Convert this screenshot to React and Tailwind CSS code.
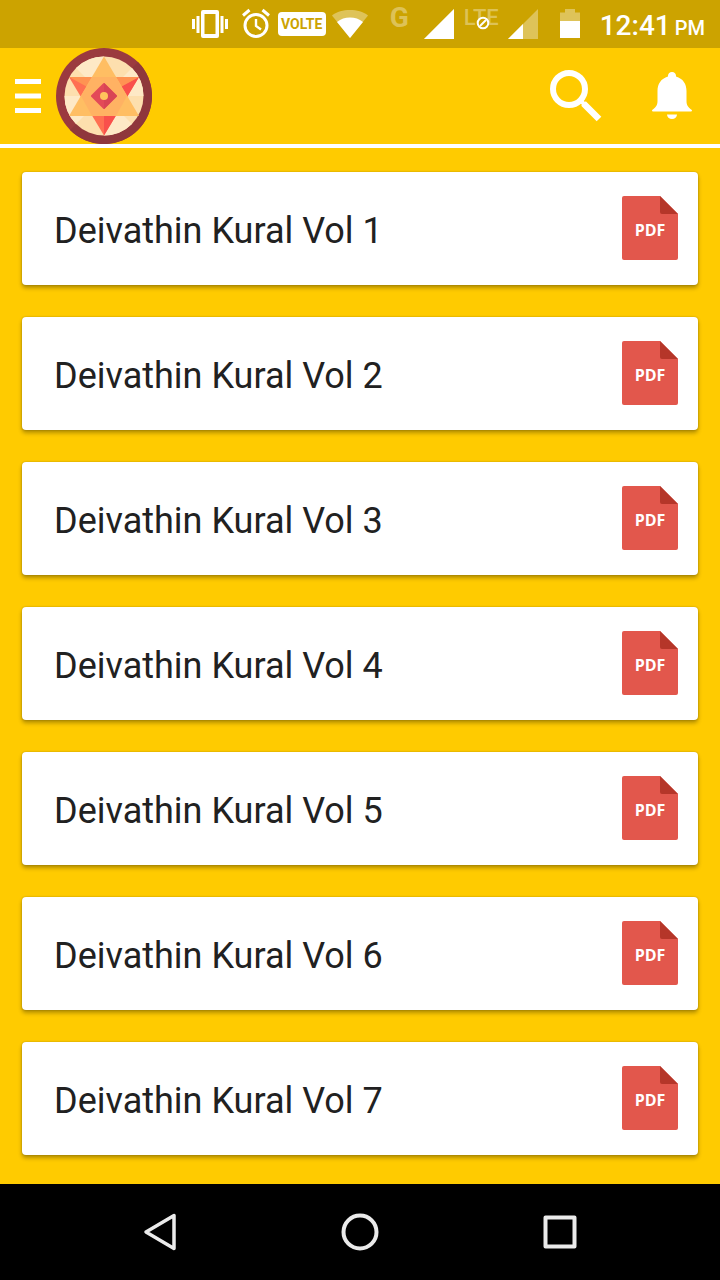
import { useState } from 'react';

const volumes = [1, 2, 3, 4, 5, 6, 7];

export default function App() {
  const [opened, setOpened] = useState(null);

  return (
    <div className="min-h-screen flex flex-col bg-[#ffcb00] font-['Roboto',sans-serif]">
      <StatusBar />
      <Header />
      <main className="flex-1 px-[22px] pt-6 pb-7">
        <ul className="flex flex-col gap-8">
          {volumes.map(vol => (
            <li key={vol}>
              <VolumeCard
                title={`Deivathin Kural Vol ${vol}`}
                active={opened === vol}
                onOpen={() => setOpened(vol)}
              />
            </li>
          ))}
        </ul>
      </main>
      <NavBar />
    </div>
  );
}

function StatusBar() {
  return (
    <div className="h-12 shrink-0 flex items-center justify-end pr-[15px] bg-[#cca300] text-white">
      {/* Vibrate */}
      <svg className="w-9 h-8" viewBox="0 0 36 32" fill="currentColor">
        <path fillRule="evenodd" d="M11 2h14a2 2 0 0 1 2 2v24a2 2 0 0 1-2 2H11a2 2 0 0 1-2-2V4a2 2 0 0 1 2-2zM12.500 6v20h11V6z" />
        <path d="M4.500 8h3v17h-3zM0 11h3v10H0zM28.500 8h3v17h-3zM33 11h3v10h-3z" />
      </svg>
      {/* Alarm */}
      <svg className="w-7 h-8 ml-3.5" viewBox="0 0 28 32" fill="none" stroke="currentColor" strokeWidth="3">
        <circle cx="14" cy="17.500" r="11" />
        <path strokeWidth="2.400" d="M14 11v7l5 3.500" />
        <path d="M1 7.500L7.500 2M27 7.500L20.500 2" />
      </svg>
      <span className="w-12 h-6 ml-2 flex items-center justify-center rounded bg-white text-[#cca300] text-sm font-bold">
        VOLTE
      </span>
      {/* Wifi */}
      <svg className="w-9 h-8 ml-1.5" viewBox="0 0 36 32" fill="currentColor">
        <path opacity=".35" d="M18 30L0 7.500C5 3.500 11 2 18 2s13 1.500 18 5.500z" />
        <path d="M18 30L5 14c4-3.300 8-4.500 13-4.500s9 1.200 13 4.500z" />
      </svg>
      <span className="w-5 h-8 ml-[22px] text-white/35 text-[28px] leading-5 font-bold">G</span>
      <Signal className="w-[30px] h-8 ml-3.5" level={30} />
      <span className="relative w-9 h-8 ml-2.5 text-white/35 text-[22px] leading-5 font-medium">
        LTE
        <svg className="absolute left-3 top-2 w-3.5 h-3.5" viewBox="0 0 14 14" fill="#cca300" stroke="white" strokeWidth="2">
          <circle cx="7" cy="7" r="5.300" />
          <path d="M4 10l6-6" />
        </svg>
      </span>
      <Signal className="w-[30px] h-8 ml-2" level={15} />
      {/* Battery */}
      <svg className="w-5 h-8 ml-[22px]" viewBox="0 0 20 32" fill="currentColor">
        <path opacity=".35" d="M0 13V4.500h5V1h10v3.500h5V13z" />
        <path d="M0 13h20v17H0z" />
      </svg>
      <span className="ml-5 pt-1 flex items-baseline gap-1 text-[28px] leading-8 font-medium">
        12:41
        <span className="text-xl">PM</span>
      </span>
    </div>
  );
}

function Signal({ className, level }) {
  return (
    <svg className={className} viewBox="0 0 30 32" fill="currentColor">
      <path opacity=".35" d="M0 31L30 1v30z" />
      <path d={`M0 31L${level} ${31 - level}V31z`} />
    </svg>
  );
}

function Header() {
  return (
    <header className="h-[100px] shrink-0 flex items-center border-b-4 border-white pl-[15px] pr-7 text-white">
      <button aria-label="Menu">
        <svg className="w-[26px] h-9" viewBox="0 0 26 36" fill="currentColor">
          <path d="M0 1h26v5H0zM0 15.500h26v5H0zM0 30h26v5H0z" />
        </svg>
      </button>
      <Logo />
      <button aria-label="Search" className="ml-auto">
        <svg className="w-[52px] h-[52px]" viewBox="0 0 52 52" fill="none" stroke="currentColor">
          <circle cx="19" cy="19" r="16" strokeWidth="6" />
          <path strokeWidth="6.500" d="M33.500 33.500L49 49" />
          <path strokeWidth="4" d="M29 29l6 6" />
        </svg>
      </button>
      <button aria-label="Notifications" className="ml-[50px]">
        <svg className="w-10 h-12" viewBox="0 0 40 48" fill="currentColor">
          <path d="M20 0a4 4 0 0 1 4 4.500C31 6.500 34.500 12 34.500 19v10c0 4 1.500 6.500 5.300 9 .4 1 0 1.500-.8 1.500H1c-.8 0-1.200-.5-.8-1.500C4 35.500 5.500 33 5.500 29V19C5.500 12 9 6.500 16 4.500A4 4 0 0 1 20 0z" />
          <path d="M15 42.500h10a5 4.500 0 0 1-10 0z" />
        </svg>
      </button>
    </header>
  );
}

function Logo() {
  return (
    <svg className="w-24 h-24 ml-[15px]" viewBox="-48 -48 96 96">
      <circle r="48" fill="#9b3a3f" />
      <path d="M34-34A48 48 0 0 1-34 34z" fill="#8f373c" />
      <circle r="39.500" fill="#fddfae" />
      {/* Light rays behind the star */}
      <path d="M0 0L-28-28A39.500 39.500 0 0 1 0-39.500zM0 0L28-28A39.500 39.500 0 0 1 39.500 0zM0 0L28 28A39.500 39.500 0 0 1 0 39.500zM0 0L-28 28A39.500 39.500 0 0 1-39.500 0z" fill="#fee9c6" />
      <path d="M-35-19h70L0 39.500z" fill="#ff6f52" />
      <path d="M35-19L0 39.500V0z" fill="#f9504c" />
      <path d="M-35-19h70L0 0z" fill="#ff9352" />
      <path d="M0-39.500L35 20h-70z" fill="#ffbe63" />
      <path d="M-12-19h24L23 0 12 20h-24L-23 0z" fill="#ffb263" />
      <rect x="-9.500" y="-9.500" width="19" height="19" rx="1" transform="rotate(45)" fill="#e34a58" />
      <path d="M0-13L13 0 0 13z" fill="#d94555" />
      <circle r="4" fill="#ffc45c" />
    </svg>
  );
}

function VolumeCard({ title, active, onOpen }) {
  return (
    <button
      onClick={onOpen}
      aria-pressed={active}
      className="w-full flex items-start justify-between pl-8 pr-5 pt-6 pb-[19px] rounded bg-white text-left shadow-[0_3px_4px_rgba(0,0,0,0.3),0_0_2px_rgba(0,0,0,0.25)]"
    >
      <span className="text-[36px] leading-[70px] text-[#212121]">{title}</span>
      <PdfIcon />
    </button>
  );
}

function PdfIcon() {
  return (
    <svg className="w-14 h-16" viewBox="0 0 56 64">
      <path d="M2 0h36l18 18v44a2 2 0 0 1-2 2H2a2 2 0 0 1-2-2V2a2 2 0 0 1 2-2z" fill="#e2574c" />
      <path d="M38 0l18 18H40a2 2 0 0 1-2-2z" fill="#b53629" />
      <text x="28" y="40" textAnchor="middle" fill="white" className="font-['Open_Sans',sans-serif] text-base font-bold">PDF</text>
    </svg>
  );
}

function NavBar() {
  return (
    <nav className="h-24 shrink-0 px-15 grid grid-cols-3 bg-black text-[#ebebeb]">
      <button aria-label="Back" className="flex justify-center items-center">
        <svg className="w-10 h-10" viewBox="0 0 40 40" fill="none" stroke="currentColor" strokeWidth="3.500" strokeLinejoin="round">
          <path d="M34 3.500v33L6 20z" />
        </svg>
      </button>
      <button aria-label="Home" className="flex justify-center items-center">
        <svg className="w-10 h-10" viewBox="0 0 40 40" fill="none" stroke="currentColor" strokeWidth="4">
          <circle cx="20" cy="20" r="16.500" />
        </svg>
      </button>
      <button aria-label="Recent apps" className="flex justify-center items-center">
        <svg className="w-10 h-10" viewBox="0 0 40 40" fill="none" stroke="currentColor" strokeWidth="4" strokeLinejoin="round">
          <path d="M5.500 5.500h29v29h-29z" />
        </svg>
      </button>
    </nav>
  );
}
